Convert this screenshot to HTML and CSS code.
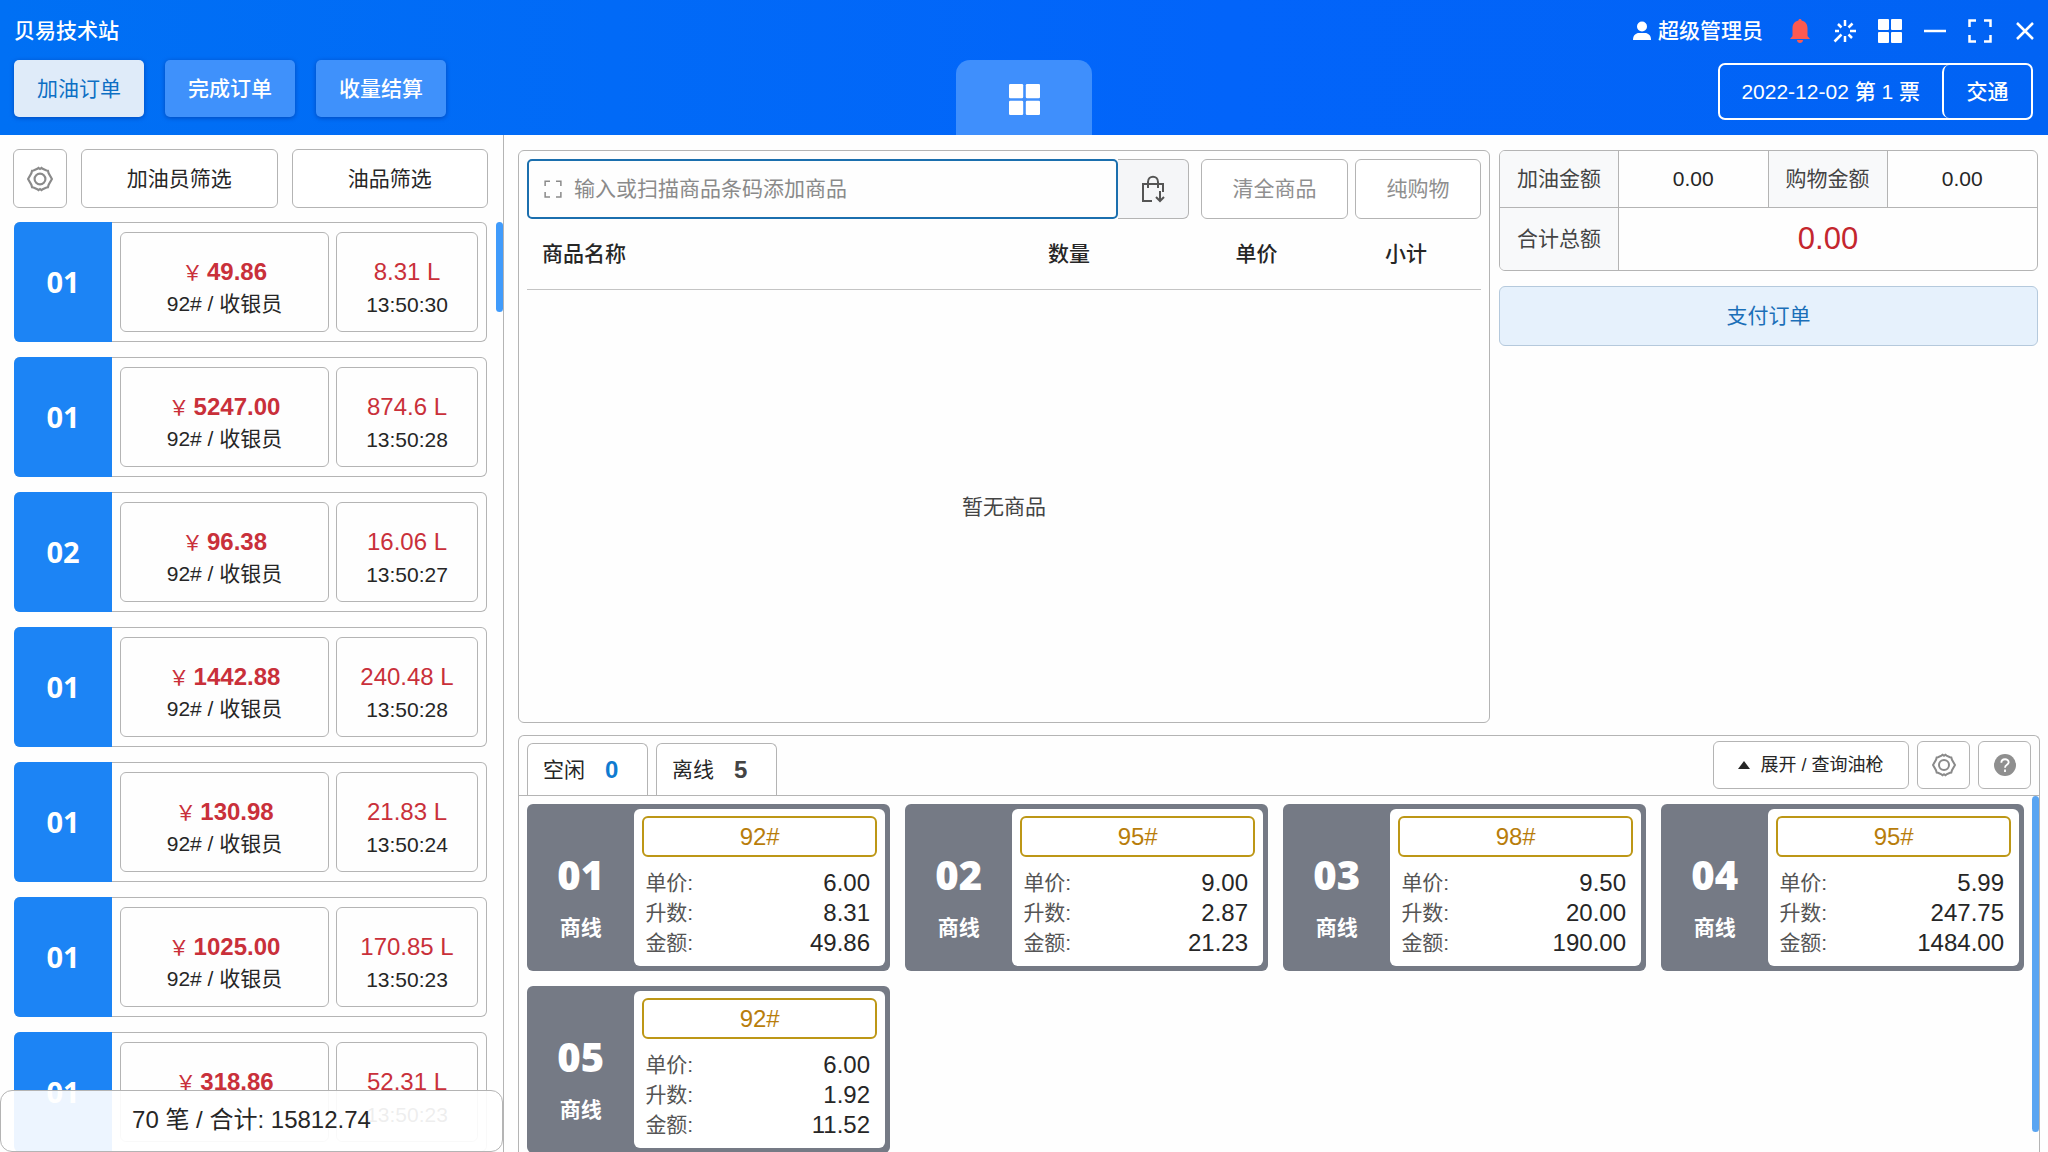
FILE: index.html
```html
<!DOCTYPE html>
<html lang="zh-CN">
<head>
<meta charset="utf-8">
<meta name="viewport" content="width=device-width, initial-scale=1">
<title>贝易技术站</title>
<link rel="stylesheet" href="styles.css">
</head>
<body>
<svg class="sprite" aria-hidden="true">
  <symbol id="gear" viewBox="0 0 24 24"><path d="M9.500 2.600 L10.600 1.800 12 2.800 13.400 1.800 14.500 2.600 L18 4.200 19.300 4.400 20 6.800 L23 12 20 17.200 19.300 19.600 18 19.800 L14.500 21.400 13.400 22.200 12 21.200 10.600 22.200 9.500 21.400 L6 19.800 4.700 19.600 4 17.200 L1 12 4 6.800 4.700 4.400 6 4.200 Z"/><circle cx="12" cy="12" r="5"/></symbol>
  <symbol id="grid" viewBox="0 0 24 24"><rect x="0" y="0" width="11" height="11" rx="1"/><rect x="13" y="0" width="11" height="11" rx="1"/><rect x="0" y="13" width="11" height="11" rx="1"/><rect x="13" y="13" width="11" height="11" rx="1"/></symbol>
  <symbol id="corners" viewBox="0 0 24 24"><path d="M1.500 8V1.500H8M16 1.500h6.500V8M22.500 16v6.500H16M8 22.500H1.500V16"/></symbol>
</svg>

<header class="header">
  <div class="header-left">
    <h1 class="brand">贝易技术站</h1>
    <nav class="nav">
      <button class="nav-btn active">加油订单</button>
      <button class="nav-btn">完成订单</button>
      <button class="nav-btn">收量结算</button>
    </nav>
  </div>
  <button class="home-tab" aria-label="主页"><svg class="icon-home"><use href="#grid"/></svg></button>
  <div class="header-right">
    <div class="tools">
      <span class="user"><svg class="icon-user" viewBox="0 0 20 20"><circle cx="10" cy="5.500" r="5"/><path d="M1 19c0-5 3-7 6-7h6c3 0 6 2 6 7z"/></svg>超级管理员</span>
      <button class="tool" aria-label="通知"><svg class="icon-bell" viewBox="0 0 24 24"><path d="M12 0c-1 0-1.600.6-1.600 1.500C6.500 2.300 4.500 5.500 4.500 9v8L2 20h20l-2.500-3V9c0-3.500-2-6.700-5.900-7.500C13.600.6 13 0 12 0z"/><path d="M9 21h6c0 4-6 4-6 0z"/></svg></button>
      <button class="tool" aria-label="刷新"><svg class="icon-line" viewBox="0 0 24 24"><path d="M12 1v6M12 17v6M17 12h6M2 12h4M19.500 4.500l-4 4M8.500 15.500L1.500 22.500M5 5l3.500 3.500M15.500 15.500l3.500 3.500"/></svg></button>
      <button class="tool" aria-label="应用"><svg class="icon-grid"><use href="#grid"/></svg></button>
      <button class="tool" aria-label="最小化"><svg class="icon-line" viewBox="0 0 24 24"><path d="M1 12h22"/></svg></button>
      <button class="tool" aria-label="全屏"><svg class="icon-line"><use href="#corners"/></svg></button>
      <button class="tool" aria-label="关闭"><svg class="icon-line" viewBox="0 0 24 24"><path d="M4 4l16 16M20 4L4 20"/></svg></button>
    </div>
    <div class="shift">
      <span class="shift-date">2022-12-02 第 1 票</span>
      <button class="shift-btn">交通</button>
    </div>
  </div>
</header>

<div class="body">
  <aside class="sidebar">
    <div class="filters">
      <button class="btn filter-set" aria-label="设置"><svg class="icon-gear"><use href="#gear"/></svg></button>
      <button class="btn filter">加油员筛选</button>
      <button class="btn filter">油品筛选</button>
    </div>
    <div class="orders">
      <article class="order"><b class="gun">01</b><div class="cell sum"><b class="money"><i>￥</i>49.86</b><span>92# / 收银员</span></div><div class="cell"><span class="litre">8.31 L</span><time>13:50:30</time></div></article>
      <article class="order"><b class="gun">01</b><div class="cell sum"><b class="money"><i>￥</i>5247.00</b><span>92# / 收银员</span></div><div class="cell"><span class="litre">874.6 L</span><time>13:50:28</time></div></article>
      <article class="order"><b class="gun">02</b><div class="cell sum"><b class="money"><i>￥</i>96.38</b><span>92# / 收银员</span></div><div class="cell"><span class="litre">16.06 L</span><time>13:50:27</time></div></article>
      <article class="order"><b class="gun">01</b><div class="cell sum"><b class="money"><i>￥</i>1442.88</b><span>92# / 收银员</span></div><div class="cell"><span class="litre">240.48 L</span><time>13:50:28</time></div></article>
      <article class="order"><b class="gun">01</b><div class="cell sum"><b class="money"><i>￥</i>130.98</b><span>92# / 收银员</span></div><div class="cell"><span class="litre">21.83 L</span><time>13:50:24</time></div></article>
      <article class="order"><b class="gun">01</b><div class="cell sum"><b class="money"><i>￥</i>1025.00</b><span>92# / 收银员</span></div><div class="cell"><span class="litre">170.85 L</span><time>13:50:23</time></div></article>
      <article class="order"><b class="gun">01</b><div class="cell sum"><b class="money"><i>￥</i>318.86</b></div><div class="cell"><span class="litre">52.31 L</span><time>13:50:23</time></div></article>
      <div class="scroll-thumb"></div>
    </div>
    <div class="total">70 笔 / 合计: 15812.74</div>
  </aside>

  <main class="main">
    <div class="top">
      <section class="goods">
        <div class="goods-bar">
          <label class="search"><svg class="icon-scan"><use href="#corners"/></svg><input type="text" aria-label="商品条码" placeholder="输入或扫描商品条码添加商品"></label>
          <button class="bag" aria-label="选择商品"><svg class="icon-bag" viewBox="0 0 24 28"><path d="M11 26H2V9h20v8M7 13V7c0-7 10-7 10 0v6M19 16v10M15 22l4 4 4-4"/></svg></button>
          <button class="btn muted clear">清全商品</button>
          <button class="btn muted pure">纯购物</button>
        </div>
        <table class="goods-table">
          <thead><tr><th class="name">商品名称</th><th class="qty">数量</th><th class="price">单价</th><th class="subtotal">小计</th></tr></thead>
        </table>
        <p class="empty">暂无商品</p>
      </section>
      <section class="pay">
        <table class="sums">
          <tr><th>加油金额</th><td>0.00</td><th>购物金额</th><td>0.00</td></tr>
          <tr><th>合计总额</th><td colspan="3" class="grand">0.00</td></tr>
        </table>
        <button class="pay-btn">支付订单</button>
      </section>
    </div>

    <section class="pumps">
      <div class="pump-bar">
        <button class="tab">空闲<b class="idle">0</b></button>
        <button class="tab">离线<b>5</b></button>
        <div class="pump-tools">
          <button class="btn expand"><svg class="icon-up" viewBox="0 0 12 8"><path d="M6 0l6 8H0z"/></svg>展开 / 查询油枪</button>
          <button class="btn square" aria-label="设置"><svg class="icon-gear"><use href="#gear"/></svg></button>
          <button class="btn square" aria-label="帮助"><svg class="icon-help" viewBox="0 0 24 24"><circle cx="12" cy="12" r="12"/><path d="M8 9.500c0-5 8-5 8-.5 0 3-4 2.500-4 6M12 17v2.500"/></svg></button>
        </div>
      </div>
      <div class="pump-grid">
        <article class="pump"><div class="pump-id"><b>01</b><span>商线</span></div><div class="pump-info"><div class="oil">92#</div><dl><dt>单价:</dt><dd>6.00</dd><dt>升数:</dt><dd>8.31</dd><dt>金额:</dt><dd>49.86</dd></dl></div></article>
        <article class="pump"><div class="pump-id"><b>02</b><span>商线</span></div><div class="pump-info"><div class="oil">95#</div><dl><dt>单价:</dt><dd>9.00</dd><dt>升数:</dt><dd>2.87</dd><dt>金额:</dt><dd>21.23</dd></dl></div></article>
        <article class="pump"><div class="pump-id"><b>03</b><span>商线</span></div><div class="pump-info"><div class="oil">98#</div><dl><dt>单价:</dt><dd>9.50</dd><dt>升数:</dt><dd>20.00</dd><dt>金额:</dt><dd>190.00</dd></dl></div></article>
        <article class="pump"><div class="pump-id"><b>04</b><span>商线</span></div><div class="pump-info"><div class="oil">95#</div><dl><dt>单价:</dt><dd>5.99</dd><dt>升数:</dt><dd>247.75</dd><dt>金额:</dt><dd>1484.00</dd></dl></div></article>
        <article class="pump"><div class="pump-id"><b>05</b><span>商线</span></div><div class="pump-info"><div class="oil">92#</div><dl><dt>单价:</dt><dd>6.00</dd><dt>升数:</dt><dd>1.92</dd><dt>金额:</dt><dd>11.52</dd></dl></div></article>
        <div class="pump-thumb"></div>
      </div>
    </section>
  </main>
</div>
</body>
</html>
```

FILE: styles.css
```css
* { box-sizing: border-box; }

body {
  margin: 0;
  height: 100vh;
  display: flex;
  flex-direction: column;
  overflow: hidden;
  background: #fefefe;
  color: #262626;
  font: 21px/30px "Liberation Sans", "Noto Sans CJK SC", sans-serif;
}

button, input { font: inherit; color: inherit; margin: 0; padding: 0; }
button { cursor: pointer; }
svg { display: block; flex: none; }
.sprite { position: absolute; width: 0; height: 0; }

/* Header */
.header {
  flex: none;
  height: 135px;
  display: grid;
  grid-template-columns: 1fr 136px 1fr;
  background: linear-gradient(90deg, #0070f4, #0264fa 60%, #0163f4);
  color: #fff;
}
.header-left { padding: 16px 14px 0; }
.brand { margin: 0 0 14px; font-size: 21px; line-height: 30px; font-weight: 500; }
.nav { display: flex; gap: 21px; }
.nav-btn {
  width: 130px;
  height: 57px;
  border: 0;
  border-radius: 5px;
  background: #3f91fb;
  font-weight: 500;
  box-shadow: 0 1px 4px rgba(0, 50, 150, .6);
}
.nav-btn.active { background: #dfebf9; color: #0d6fc4; font-weight: 400; }
.home-tab {
  align-self: end;
  height: 75px;
  display: flex;
  align-items: center;
  justify-content: center;
  padding-top: 3px;
  border: 0;
  border-radius: 14px 14px 0 0;
  background: #3f8ffc;
}
.icon-home { width: 31px; height: 31px; fill: #fff; }
.header-right {
  display: flex;
  flex-direction: column;
  align-items: flex-end;
  gap: 17px;
  padding: 16px 11px 0 0;
}
.tools { display: flex; align-items: center; gap: 21px; height: 30px; }
.user { display: flex; align-items: center; gap: 6px; margin-right: 4px; font-weight: 500; }
.icon-user { width: 20px; height: 20px; fill: #fff; }
.tool { width: 24px; height: 24px; border: 0; background: none; }
.tool svg { width: 24px; height: 24px; }
.icon-line { fill: none; stroke: #fff; stroke-width: 2.500; }
.icon-grid { fill: #fff; }
.icon-bell { fill: #fb5a50; }
.shift {
  display: flex;
  height: 57px;
  margin-right: 4px;
  border: 2px solid #fff;
  border-radius: 7px;
  line-height: 53px;
  font-weight: 500;
}
.shift-date { padding: 0 22px 0 21px; }
.shift-btn {
  width: 89px;
  border: 0;
  border-left: 2px solid #fff;
  border-radius: 7px;
  background: none;
  font-weight: 500;
}

/* Shared buttons */
.btn {
  border: 1px solid #b4b4b4;
  border-radius: 6px;
  background: #fff;
  display: flex;
  align-items: center;
  justify-content: center;
}
.icon-gear { width: 26px; height: 26px; fill: none; stroke: #8a8a8a; stroke-width: 2; }

.body { flex: 1; min-height: 0; display: flex; }

/* Orders column */
.sidebar {
  position: relative;
  flex: none;
  width: 504px;
  padding: 14px 0 0 13px;
  border-right: 1px solid #b4b4b4;
}
.filters { display: flex; gap: 14px; height: 59px; margin: 0 15px 14px 0; }
.filter-set { width: 54px; }
.filter { flex: 1; }
.orders { display: flex; flex-direction: column; gap: 15px; position: relative; padding: 0 16px 0 1px; }
.order {
  height: 120px;
  display: flex;
  gap: 7px;
  padding: 9px 8px 9px 0;
  border: 1px solid #b4b4b4;
  border-left: 0;
  border-radius: 6px;
}
.gun {
  width: 98px;
  margin: -10px 1px -10px 0;
  border-radius: 6px 0 0 6px;
  background: #1c84f5;
  color: #fff;
  font-family: "Noto Sans", sans-serif;
  font-size: 29px;
  line-height: 120px;
  text-align: center;
}
.cell {
  width: 142px;
  display: flex;
  flex-direction: column;
  align-items: center;
  padding-top: 23px;
  border: 1px solid #b4b4b4;
  border-radius: 6px;
}
.cell time { line-height: 34px; }
.sum { flex: 1; }
.money, .litre { font-size: 24px; line-height: 32px; color: #c9303a; }
.money i { margin-right: 4px; font-style: normal; font-weight: 400; font-size: 21px; }
.scroll-thumb {
  position: absolute;
  right: 0;
  top: 0;
  width: 7px;
  height: 90px;
  border-radius: 4px;
  background: #409bfb;
}
.total {
  position: absolute;
  left: 0;
  right: 0;
  bottom: 0;
  height: 62px;
  border: 1px solid #b4b4b4;
  border-radius: 12px;
  background: rgba(255, 255, 255, .92);
  font-size: 24px;
  line-height: 58px;
  text-align: center;
}

/* Work area */
.main {
  flex: 1;
  min-width: 0;
  display: flex;
  flex-direction: column;
  gap: 12px;
  padding: 15px 8px 0 14px;
}
.top { display: flex; gap: 9px; height: 573px; margin-right: 2px; }
.goods {
  flex: 1;
  display: flex;
  flex-direction: column;
  padding: 8px;
  border: 1px solid #b4b4b4;
  border-radius: 6px;
}
.goods-bar { display: flex; height: 60px; }
.search {
  flex: 1;
  display: flex;
  align-items: center;
  gap: 12px;
  padding-left: 15px;
  border: 2px solid #1b6fae;
  border-radius: 5px;
}
.search input { flex: 1; border: 0; outline: 0; background: none; }
.search input::placeholder { color: #8a8a8a; opacity: 1; }
.icon-scan { width: 18px; height: 18px; fill: none; stroke: #8a8a8a; stroke-width: 2; }
.bag {
  width: 71px;
  display: flex;
  align-items: center;
  justify-content: center;
  border: 1px solid #b4b4b4;
  border-left: 0;
  border-radius: 0 6px 6px 0;
  background: #f5f6f8;
}
.icon-bag { width: 24px; height: 28px; fill: none; stroke: #555; stroke-width: 2; }
.muted { color: #8f8f8f; }
.clear { width: 147px; margin: 0 7px 0 12px; }
.pure { width: 126px; }
.goods-table { width: 100%; border-spacing: 0; table-layout: fixed; }
.goods-table th { height: 71px; padding: 0; font-weight: 500; border-bottom: 1px solid #c4c4c4; }
.goods-table .name { padding-left: 15px; text-align: left; }
.goods-table .qty { width: 226px; }
.goods-table .price { width: 149px; }
.goods-table .subtotal { width: 150px; }
.empty { flex: 1; margin: 0; padding-top: 10px; display: flex; align-items: center; justify-content: center; color: #444; }

.pay { width: 539px; }
.sums {
  width: 100%;
  border: 1px solid #b4b4b4;
  border-radius: 6px;
  border-spacing: 0;
  overflow: hidden;
  table-layout: fixed;
}
.sums th { width: 119px; height: 57px; padding: 0; background: #f8f9fa; font-weight: 400; color: #444; border-right: 1px solid #b4b4b4; }
.sums td { padding: 0; text-align: center; border-right: 1px solid #b4b4b4; }
.sums td:last-child { border-right: 0; }
.sums tr:first-child > * { border-bottom: 1px solid #b4b4b4; }
.sums tr:last-child > * { height: 62px; }
.sums .grand { font-size: 31px; color: #c4262e; }
.pay-btn {
  width: 100%;
  height: 60px;
  margin-top: 15px;
  border: 1px solid #b5c9dc;
  border-radius: 6px;
  background: #e6f1fc;
  color: #1b6fb8;
}

/* Pump panel */
.pumps {
  flex: 1;
  min-height: 0;
  display: flex;
  flex-direction: column;
  border: 1px solid #b4b4b4;
  border-bottom: 0;
  border-radius: 6px 6px 0 0;
}
.pump-bar {
  flex: none;
  display: flex;
  align-items: flex-end;
  gap: 8px;
  height: 60px;
  padding: 0 8px;
  border-bottom: 1px solid #b4b4b4;
}
.tab {
  display: flex;
  align-items: center;
  gap: 20px;
  width: 121px;
  height: 52px;
  padding-left: 15px;
  border: 1px solid #b4b4b4;
  border-bottom: 0;
  border-radius: 6px 6px 0 0;
  background: #fff;
}
.tab b { font-size: 24px; color: #444; }
.tab .idle { color: #0f7bd0; }
.pump-tools { display: flex; gap: 8px; margin: 0 0 6px auto; }
.pump-tools .btn { height: 48px; }
.expand { width: 196px; gap: 10px; font-size: 18px; }
.square { width: 53px; }
.pump-tools .icon-gear { width: 24px; height: 24px; }
.icon-up { width: 12px; height: 8px; fill: #262626; }
.icon-help { width: 22px; height: 22px; fill: #8f8f8f; }
.icon-help path { fill: none; stroke: #fff; stroke-width: 2; }
.pump-grid {
  position: relative;
  flex: 1;
  min-height: 0;
  display: grid;
  grid-template-columns: repeat(4, 1fr);
  grid-auto-rows: 167px;
  gap: 15px;
  padding: 8px 15px 0 8px;
}
.pump { display: flex; padding: 5px; border-radius: 6px; background: #757a85; }
.pump-id {
  flex: 1;
  display: flex;
  flex-direction: column;
  align-items: center;
  justify-content: center;
  gap: 18px;
  padding: 22px 5px 0 0;
  color: #fff;
  font-weight: 700;
}
.pump-id b { font-family: "Noto Sans", sans-serif; font-size: 40px; line-height: 40px; }
.pump-info { width: 71%; padding: 7px 8px 0; border-radius: 6px; background: #fff; }
.oil {
  height: 41px;
  border: 2px solid #bd9716;
  border-radius: 6px;
  color: #b87d0b;
  font-size: 24px;
  line-height: 37px;
  text-align: center;
}
.pump-info dl {
  display: grid;
  grid-template-columns: auto 1fr;
  margin: 11px 7px 0 3px;
}
.pump-info dt { color: #555; }
.pump-info dd { margin: 0; font-size: 24px; text-align: right; }
.pump-thumb {
  position: absolute;
  top: 0;
  right: 0;
  bottom: 20px;
  width: 7px;
  border-radius: 4px;
  background: #5aa5f2;
}
```
